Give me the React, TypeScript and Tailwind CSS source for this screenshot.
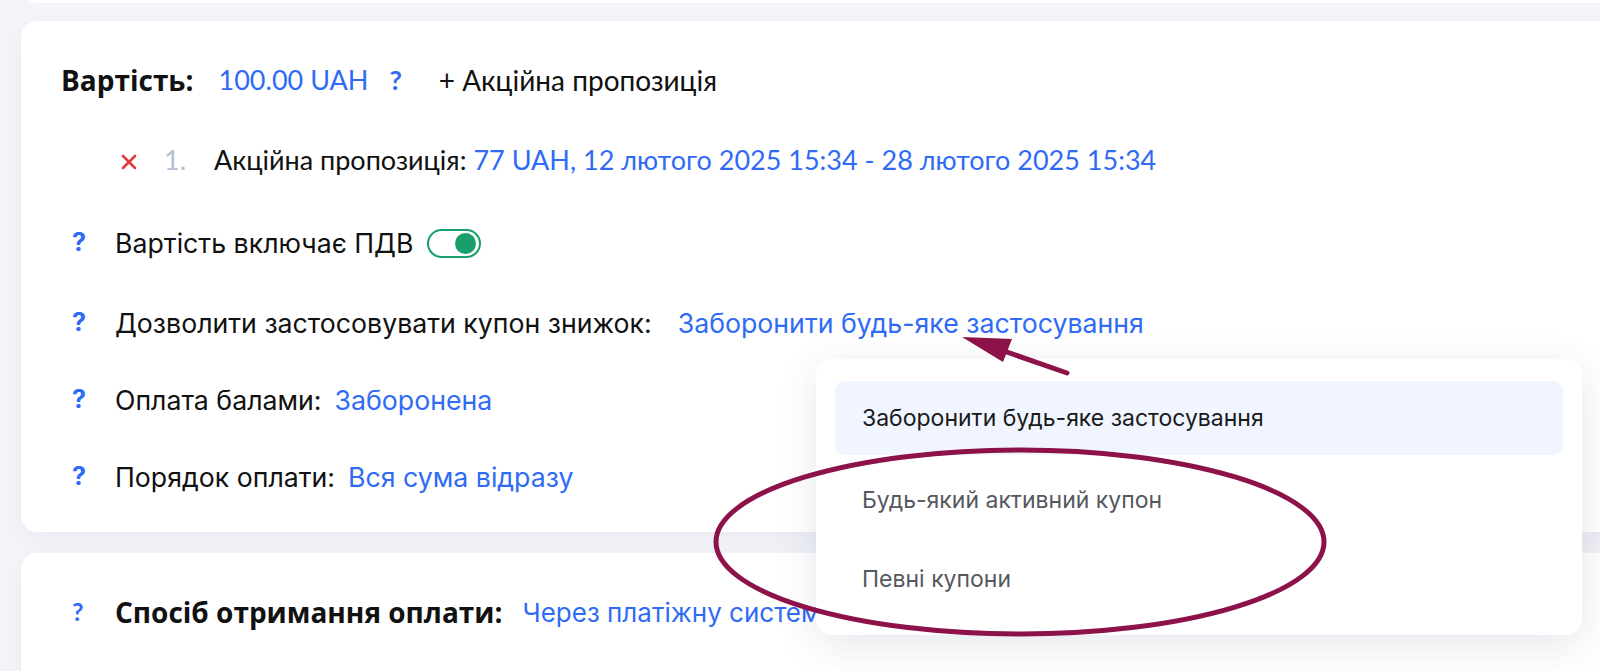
import React from "react";
import { X } from "lucide-react";

const blue = "text-[#2f6bf5]";

function Help() {
  return <span className={`w-[43px] shrink-0 text-[25px] font-bold ${blue}`}>?</span>;
}

function Toggle() {
  return (
    <span className="ml-[14px] flex h-[29px] w-[54px] items-center justify-end rounded-full border-2 border-[#19a06a] px-[3px]">
      <span className="h-[21px] w-[21px] rounded-full bg-[#19a06a]" />
    </span>
  );
}

export default function App() {
  return (
    <div className="relative h-[671px] w-[1600px] overflow-hidden bg-[#f4f5f9] font-['Lato',sans-serif] text-[#111]">
      {/* card above, only its bottom edge is visible */}
      <div className="-mt-[40px] ml-[21px] h-[43px] w-[1620px] rounded-[16px] bg-white" />

      {/* price card */}
      <div className="ml-[21px] mt-[18px] h-[511px] w-[1620px] rounded-[16px] bg-white pl-[40px] pt-[41px] shadow-[0_8px_24px_rgba(60,70,110,0.06)]">
        <div className="flex h-[36px] items-center text-[27px]">
          <span className="font-['Open_Sans',sans-serif] text-[28px] font-bold">Вартість:</span>
          <span className={`ml-[25px] ${blue}`}>100.00 UAH</span>
          <span className={`ml-[21px] font-bold ${blue}`}>?</span>
          <span className="ml-[37px] text-[28px]">+ Акційна пропозиція</span>
        </div>

        <div className="mt-[44px] flex h-[36px] items-center pl-[62px] text-[27px]">
          <span className="-ml-[6px] flex w-[47px] items-center pt-[3px]">
            <X size={24} strokeWidth={2.6} className="text-[#e2393f]" />
          </span>
          <span className="w-[50px] text-[#b3bfd0]">1.</span>
          <span>Акційна пропозиція:</span>
          <span className={`ml-[7px] ${blue}`}>77 UAH, 12 лютого 2025 15:34 - 28 лютого 2025 15:34</span>
        </div>

        <div className="font-['Inter',sans-serif] text-[26.7px]">
          <div className="mt-[47px] flex h-[36px] items-center pl-[11px]">
            <Help />
            <span>Вартість включає ПДВ</span>
            <Toggle />
          </div>
          <div className="mt-[44px] flex h-[36px] items-center pl-[11px]">
            <Help />
            <span>Дозволити застосовувати купон знижок:</span>
            <span className={`ml-[26px] ${blue}`}>Заборонити будь-яке застосування</span>
          </div>
          <div className="mt-[41px] flex h-[36px] items-center pl-[11px]">
            <Help />
            <span>Оплата балами:</span>
            <span className={`ml-[13px] ${blue}`}>Заборонена</span>
          </div>
          <div className="mt-[41px] flex h-[36px] items-center pl-[11px]">
            <Help />
            <span>Порядок оплати:</span>
            <span className={`ml-[13px] ${blue}`}>Вся сума відразу</span>
          </div>
        </div>
      </div>

      {/* payment card */}
      <div className="ml-[21px] mt-[21px] h-[200px] w-[1620px] rounded-[16px] bg-white pl-[51px] pt-[41px] shadow-[0_8px_24px_rgba(60,70,110,0.06)]">
        <div className="flex h-[36px] items-center">
          <Help />
          <span className="font-['Open_Sans',sans-serif] text-[28px] font-bold">Спосіб отримання оплати:</span>
          <span className={`ml-[20px] font-['Inter',sans-serif] text-[26px] ${blue}`}>Через платіжну систему</span>
        </div>
      </div>

      {/* dropdown menu */}
      <div className="absolute left-[816px] top-[359px] w-[766px] rounded-[16px] bg-white px-[19px] pb-[22px] pt-[22px] font-['Inter',sans-serif] text-[23px] shadow-[0_10px_40px_rgba(50,60,100,0.12)]">
        <div className="flex h-[74px] items-center rounded-[10px] bg-[#f0f5ff] px-[27px] text-[#1a1a1a]">Заборонити будь-яке застосування</div>
        <div className="flex h-[90px] items-center px-[27px] text-[#55585e]">Будь-який активний купон</div>
        <div className="flex h-[68px] items-center px-[27px] text-[#55585e]">Певні купони</div>
      </div>

      {/* annotation marks */}
      <svg className="pointer-events-none absolute left-0 top-0" width="1600" height="671" viewBox="0 0 1600 671">
        <ellipse cx="1020" cy="542" rx="304" ry="92" fill="none" stroke="#8c1249" strokeWidth="5" />
        <line x1="1067" y1="373" x2="998" y2="349" stroke="#8c1249" strokeWidth="5" strokeLinecap="round" />
        <polygon points="962,337 1012,339 1003,362" fill="#8c1249" />
      </svg>
    </div>
  );
}
